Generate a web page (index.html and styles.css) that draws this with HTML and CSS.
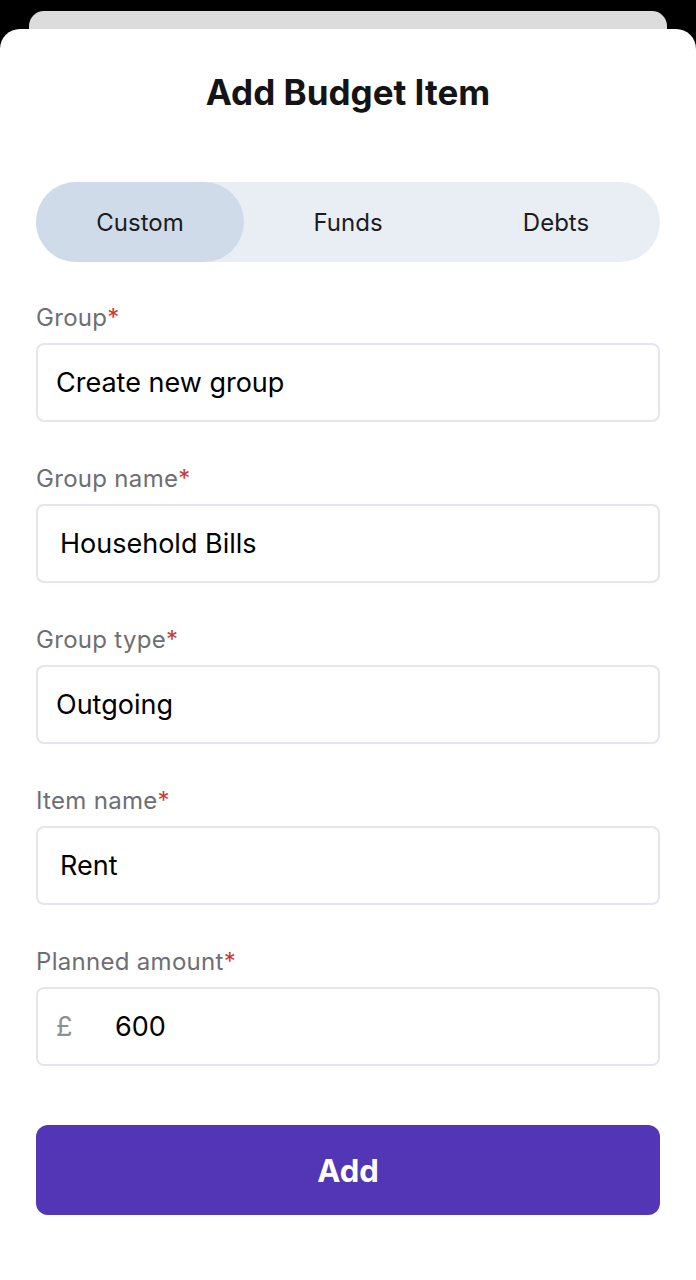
FILE: index.html
```html
<!DOCTYPE html>
<html lang="en">
<head>
<meta charset="utf-8">
<title>Add Budget Item</title>
<link rel="stylesheet" href="styles.css">
</head>
<body>
<div class="back-card"></div>
<main class="sheet">
  <h1 class="title">Add Budget Item</h1>
  <div class="segmented">
    <div class="seg seg-active">Custom</div>
    <div class="seg">Funds</div>
    <div class="seg">Debts</div>
  </div>
  <div class="field">
    <div class="label">Group<span class="req">*</span></div>
    <div class="input">Create new group</div>
  </div>
  <div class="field">
    <div class="label">Group name<span class="req">*</span></div>
    <div class="input input-text">Household Bills</div>
  </div>
  <div class="field">
    <div class="label">Group type<span class="req">*</span></div>
    <div class="input">Outgoing</div>
  </div>
  <div class="field">
    <div class="label">Item name<span class="req">*</span></div>
    <div class="input input-text">Rent</div>
  </div>
  <div class="field">
    <div class="label">Planned amount<span class="req">*</span></div>
    <div class="input input-money"><span class="currency">£</span><span class="amount">600</span></div>
  </div>
  <button class="btn">Add</button>
</main>
</body>
</html>
```
FILE: styles.css
```css
html, body {
  margin: 0;
  padding: 0;
  background: #000;
}
body {
  font-family: Inter, "Noto Sans", "Liberation Sans", sans-serif;
  width: 696px;
  height: 1280px;
  overflow: hidden;
}
.back-card {
  margin: 11px 29px 0;
  height: 18px;
  background: #dcdcdc;
  border-radius: 15px 15px 0 0;
}
.sheet {
  background: #fff;
  border-radius: 20px 20px 0 0;
  height: 1251px;
  box-sizing: border-box;
  padding: 43px 36px 0;
}
.title {
  margin: 0;
  text-align: center;
  font-size: 35px;
  line-height: 40px;
  font-weight: 700;
  color: #141414;
}
.segmented {
  margin-top: 70px;
  height: 80px;
  border-radius: 40px;
  background: #e9eef4;
  display: grid;
  grid-template-columns: repeat(3, 1fr);
}
.seg {
  display: flex;
  align-items: center;
  justify-content: center;
  font-size: 24px;
  color: #1c1c1e;
  border-radius: 40px;
}
.seg-active {
  background: #cfdbe8;
}
.field {
  margin-top: 41px;
  display: flex;
  flex-direction: column;
  gap: 12px;
}
.field + .field {
  margin-top: 42px;
}
.label {
  font-size: 24px;
  line-height: 28px;
  letter-spacing: 0.3px;
  color: #6e6e73;
  transform: translateY(1px);
}
.req {
  color: #c93a36;
}
.input {
  height: 79px;
  box-sizing: border-box;
  border: 2px solid #e3e6ef;
  border-radius: 8px;
  display: flex;
  align-items: center;
  padding-left: 18px;
  font-size: 27px;
  color: #000;
}
.input-text {
  padding-left: 22px;
}
.currency {
  color: #8e8e93;
  width: 59px;
}
.btn {
  margin-top: 59px;
  width: 100%;
  height: 90px;
  border: none;
  border-radius: 12px;
  background: #5336b5;
  color: #fff;
  font-family: inherit;
  font-size: 31px;
  font-weight: 700;
}
```
